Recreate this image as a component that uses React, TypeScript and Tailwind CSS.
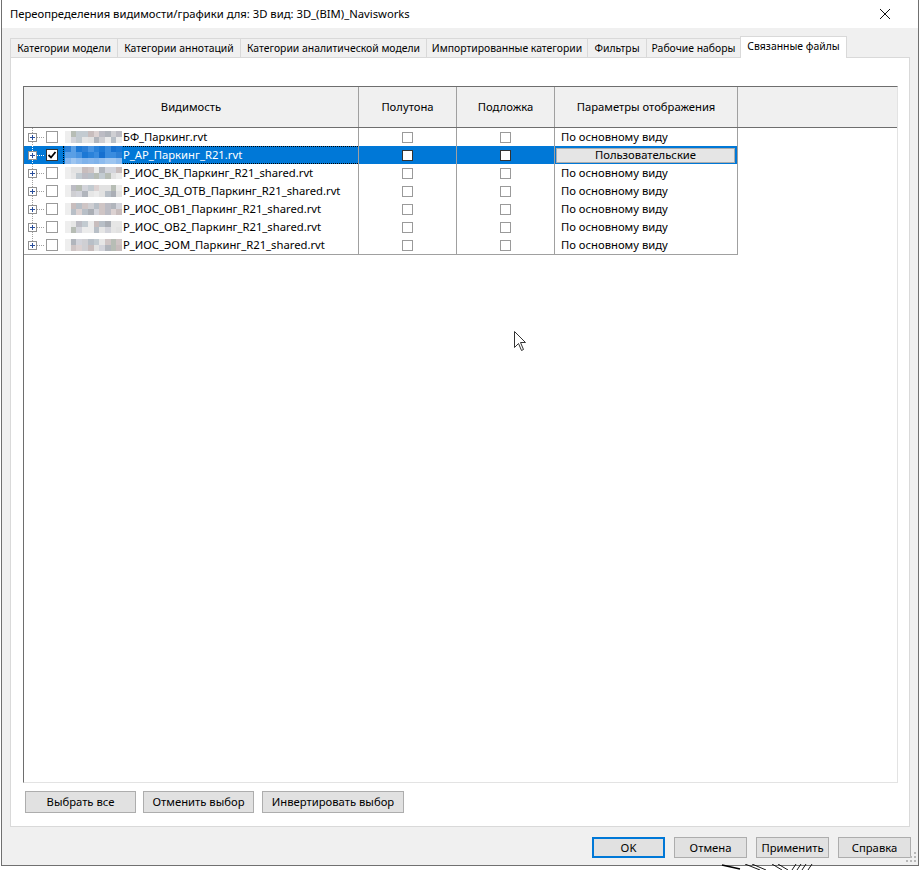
import React from "react";

const FONT = "font-['Noto_Sans',sans-serif]";

function rng(seed: number) {
  let s = seed * 7919 + 13;
  return () => {
    s = (s * 9301 + 49297) % 233280;
    return s / 233280;
  };
}

const grayPal = ["#cfcfd3", "#bcbcc4", "#dcd2d2", "#c3cbd1", "#b1b5bc", "#e2e2e2", "#cfc5c5", "#b8bfc7", "#e6e6e6", "#d3d4db", "#aaaeb5", "#ececec", "#c8bdbd", "#b7bdb5"];
const bluePal = ["#1c78d5", "#2a82da", "#3a8cdf", "#4894e2", "#2c7fd6", "#5a9fe5", "#1670d0"];
const lightBlue = ["#7fb2ea", "#8dbbee", "#9dc5f0", "#86b6ec"];

function Mosaic({ seed, sel }: { seed: number; sel?: boolean }) {
  const r = rng(seed);
  const cols = 10;
  const bw = 5.7;
  const rects: React.ReactNode[] = [];
  if (sel) {
    for (let y = 0; y < 3; y++)
      for (let x = 0; x < cols; x++) {
        const fill = y === 2 ? lightBlue[Math.floor(r() * lightBlue.length)] : bluePal[Math.floor(r() * bluePal.length)];
        rects.push(<rect key={`${x}-${y}`} x={x * bw} y={y * 6} width={bw + 0.4} height={6.4} fill={fill} />);
      }
    return (
      <svg width={57} height={18} viewBox="0 0 57 18" shapeRendering="crispEdges" className="shrink-0">
        {rects}
      </svg>
    );
  }
  for (let y = 0; y < 2; y++)
    for (let x = 0; x < cols; x++) {
      const fill = x === 0 ? "#eeeeee" : grayPal[Math.floor(r() * grayPal.length)];
      rects.push(<rect key={`${x}-${y}`} x={x * bw} y={y * 6} width={bw + 0.4} height={6.4} fill={fill} />);
    }
  return (
    <svg width={57} height={12} viewBox="0 0 57 12" shapeRendering="crispEdges" className="shrink-0">
      {rects}
    </svg>
  );
}

function Tree({ last, sel }: { last?: boolean; sel?: boolean }) {
  const dot = sel ? "#ffffff" : "#a0a0a0";
  return (
    <svg width={22} height={18} viewBox="0 0 22 18" className="shrink-0" shapeRendering="crispEdges">
      <line x1={8.5} x2={8.5} y1={0} y2={last ? 9 : 18} stroke={dot} strokeDasharray="1 1" />
      <line x1={13} x2={21} y1={9.5} y2={9.5} stroke={dot} strokeDasharray="1 1" />
      <rect x={4.5} y={5.5} width={8} height={8} fill="#ffffff" stroke="#919191" />
      <line x1={6} x2={11} y1={9.5} y2={9.5} stroke="#2a4f9c" />
      <line x1={8.5} x2={8.5} y1={7} y2={12} stroke="#2a4f9c" />
    </svg>
  );
}

function Check({ checked, sel, size }: { checked?: boolean; sel?: boolean; size: "s" | "m" }) {
  return (
    <span
      className={`${size === "m" ? "w-[12px] h-[12px]" : "w-[11px] h-[11px]"} shrink-0 border bg-white flex items-center justify-center ${
        sel ? "border-[#333333]" : "border-[#9a9a9a]"
      }`}
    >
      {checked && (
        <svg width={10} height={10} viewBox="0 0 10 10">
          <path d="M1.5 5 L4 7.5 L8.5 2" fill="none" stroke="#000" strokeWidth={1.8} />
        </svg>
      )}
    </span>
  );
}

const rows = [
  { name: "БФ_Паркинг.rvt" },
  { name: "Р_АР_Паркинг_R21.rvt", sel: true },
  { name: "Р_ИОС_ВК_Паркинг_R21_shared.rvt" },
  { name: "Р_ИОС_ЗД_ОТВ_Паркинг_R21_shared.rvt" },
  { name: "Р_ИОС_ОВ1_Паркинг_R21_shared.rvt" },
  { name: "Р_ИОС_ОВ2_Паркинг_R21_shared.rvt" },
  { name: "Р_ИОС_ЭОМ_Паркинг_R21_shared.rvt" },
];

const tabs = [
  { label: "Категории модели", w: "w-[107px]" },
  { label: "Категории аннотаций", w: "w-[123px]" },
  { label: "Категории аналитической модели", w: "w-[186px]" },
  { label: "Импортированные категории", w: "w-[161px]" },
  { label: "Фильтры", w: "w-[59px]" },
  { label: "Рабочие наборы", w: "w-[94px]" },
];

function Btn({ children, w, primary }: { children: React.ReactNode; w: string; primary?: boolean }) {
  return (
    <div
      className={`${w} h-full shrink-0 flex items-center justify-center bg-[#e1e1e1] whitespace-nowrap ${
        primary ? "border-2 border-[#0078d7]" : "border border-[#adadad]"
      }`}
    >
      {children}
    </div>
  );
}

export default function App() {
  return (
    <div className={`${FONT} relative w-[920px] h-[870px] bg-white text-[11.25px] leading-none text-black overflow-hidden`}>
      <div className="relative ml-[1px] w-[918px] h-[866px] border-x border-b border-[#707070] bg-[#f0f0f0] flex flex-col">
        {/* title bar */}
        <div className="h-[28px] shrink-0 bg-white flex items-center justify-between pl-[8px] pr-[27px]">
          <span className="whitespace-nowrap">Переопределения видимости/графики для: 3D вид: 3D_(BIM)_Navisworks</span>
          <svg width={12} height={12} viewBox="0 0 12 12">
            <path d="M1 1 L11 11 M11 1 L1 11" stroke="#111" strokeWidth={1} />
          </svg>
        </div>

        {/* tabs */}
        <div className="mt-[8px] ml-[8px] h-[21px] flex items-end shrink-0 text-[10.4px]">
          {tabs.map((t) => (
            <div
              key={t.label}
              className={`${t.w} h-[19px] shrink-0 border-l border-t border-[#d9d9d9] bg-[#f0f0f0] flex items-center justify-center whitespace-nowrap`}
            >
              {t.label}
            </div>
          ))}
          <div className="relative z-10 w-[107px] h-[22px] -mb-px shrink-0 border-l border-t border-r border-[#d9d9d9] bg-white flex items-start justify-center pt-[4px] whitespace-nowrap">
            Связанные файлы
          </div>
        </div>

        {/* tab panel */}
        <div className="ml-[8px] w-[900px] h-[770px] shrink-0 bg-white border border-[#d9d9d9] flex flex-col">
          <div className="ml-[12px] mt-[28px] w-[875px] h-[697px] border border-l-[#6e6e6e] border-t-[#6e6e6e] border-r-[#e3e3e3] border-b-[#e3e3e3] flex flex-col">
            {/* header */}
            <div className="h-[41px] shrink-0 bg-[#f0f0f0] border-b border-b-[#6e6e6e] flex">
              <div className="w-[335px] border-r border-r-[#a0a0a0] flex items-center justify-center">Видимость</div>
              <div className="w-[98px] border-r border-r-[#a0a0a0] flex items-center justify-center">Полутона</div>
              <div className="w-[98px] border-r border-r-[#a0a0a0] flex items-center justify-center">Подложка</div>
              <div className="w-[183px] border-r border-r-[#a0a0a0] flex items-center justify-center">Параметры отображения</div>
              <div className="flex-1" />
            </div>
            {/* rows */}
            <div className="flex flex-col w-[714px]">
              {rows.map((r, i) => {
                const sel = !!r.sel;
                const last = i === rows.length - 1;
                return (
                  <div
                    key={r.name}
                    className={`h-[18px] flex ${sel ? "bg-[#0078d7] text-white" : ""} ${last ? "h-[19px] border-b border-b-[#a0a0a0]" : ""}`}
                  >
                    <div className="w-[335px] h-[18px] border-r border-r-[#a0a0a0] flex items-center">
                      <Tree last={last} sel={sel} />
                      <Check size="m" checked={sel} sel={sel} />
                      <div
                        className={`ml-[5px] flex-1 h-[18px] flex items-center border border-dotted ${
                          sel ? "border-black border-r-0" : "border-transparent"
                        }`}
                      >
                        <span className="ml-[1px] flex items-center">
                          <Mosaic seed={i + 3} sel={sel} />
                        </span>
                        <span className="ml-[1px] whitespace-nowrap">{r.name}</span>
                      </div>
                    </div>
                    <div className="w-[98px] h-[18px] border-r border-r-[#a0a0a0] flex items-center justify-center">
                      <Check size="s" sel={sel} />
                    </div>
                    <div className="w-[98px] h-[18px] border-r border-r-[#a0a0a0] flex items-center justify-center">
                      <Check size="s" sel={sel} />
                    </div>
                    <div className="w-[183px] h-[18px] border-r border-r-[#a0a0a0] flex items-center">
                      {sel ? (
                        <div className="ml-[1px] w-[179px] h-[15px] bg-[#e5e5e5] border border-[#adadad] text-black flex items-center justify-center">
                          Пользовательские
                        </div>
                      ) : (
                        <span className="ml-[6px] whitespace-nowrap">По основному виду</span>
                      )}
                    </div>
                  </div>
                );
              })}
            </div>
          </div>
          {/* selection buttons */}
          <div className="ml-[14px] mt-[8px] h-[22px] flex">
            <Btn w="w-[111px]">Выбрать все</Btn>
            <div className="w-[7px] shrink-0" />
            <Btn w="w-[111px]">Отменить выбор</Btn>
            <div className="w-[8px] shrink-0" />
            <Btn w="w-[142px]">Инвертировать выбор</Btn>
          </div>
        </div>

        {/* dialog buttons */}
        <div className="mt-[10px] h-[21px] flex justify-end gap-[9px] pr-[7px]">
          <Btn w="w-[73px]" primary>
            OK
          </Btn>
          <Btn w="w-[73px]">Отмена</Btn>
          <Btn w="w-[73px]">Применить</Btn>
          <Btn w="w-[73px]">Справка</Btn>
        </div>

        {/* size grip */}
        <svg className="absolute right-[1px] bottom-[2px]" width={12} height={12} viewBox="0 0 12 12">
          {[
            [9, 1],
            [9, 5],
            [5, 5],
            [9, 9],
            [5, 9],
            [1, 9],
          ].map(([x, y]) => (
            <rect key={`${x}-${y}`} x={x} y={y} width={2} height={2} fill="#b8b8b8" />
          ))}
        </svg>
      </div>

      {/* CAD drawing peeking below the dialog */}
      <svg className="absolute left-[700px] top-[864px]" width={120} height={6} viewBox="0 0 120 6">
        <path d="M22 1 L40 5" stroke="#000" strokeWidth={1.6} />
        <path d="M45 0 L60 6 M52 0 L66 6 M72 0 L82 6 M78 0 L88 6" stroke="#000" strokeWidth={0.9} />
        <path d="M92 6 L96 0 M97 6 L101 0 M102 6 L106 0 M108 6 L112 0" stroke="#000" strokeWidth={0.9} />
      </svg>

      {/* mouse cursor */}
      <svg className="absolute left-[514px] top-[331px]" width={13} height={21} viewBox="0 0 13 21">
        <path d="M0.5 0.5 L0.5 16.5 L4.5 12.5 L7.5 19.5 L9.5 18.5 L6.5 11.5 L11.5 11.5 Z" fill="#ffffff" stroke="#333" strokeWidth={1} strokeLinejoin="miter" />
      </svg>
    </div>
  );
}
